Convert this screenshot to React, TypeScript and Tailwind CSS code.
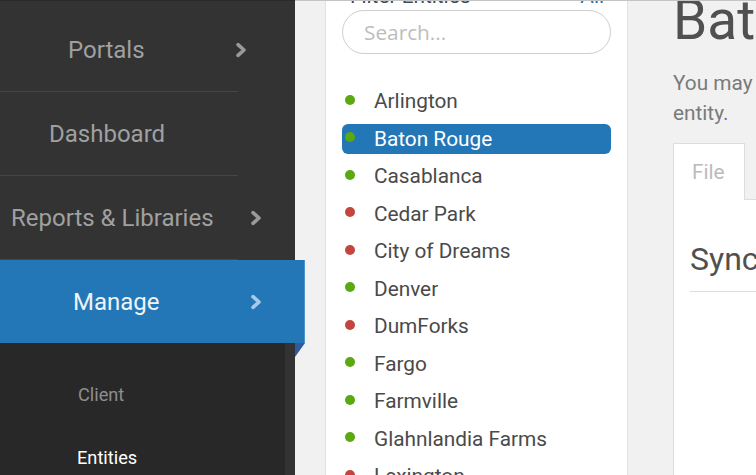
import React from "react";

const Chevron = ({ color }: { color: string }) => (
  <svg width="12" height="16" viewBox="0 0 12 16" fill="none">
    <path d="M3 2.6 L9 8 L3 13.4" stroke={color} strokeWidth="3.6" strokeLinecap="round" strokeLinejoin="round" />
  </svg>
);

const entities: { name: string; ok: boolean }[] = [
  { name: "Arlington", ok: true },
  { name: "Baton Rouge", ok: true },
  { name: "Casablanca", ok: true },
  { name: "Cedar Park", ok: false },
  { name: "City of Dreams", ok: false },
  { name: "Denver", ok: true },
  { name: "DumForks", ok: false },
  { name: "Fargo", ok: true },
  { name: "Farmville", ok: true },
  { name: "Glahnlandia Farms", ok: true },
  { name: "Lexington", ok: false },
];

export default function App() {
  return (
    <div className="flex h-[475px] w-[756px] overflow-hidden font-['Roboto','Liberation_Sans',sans-serif]">
      {/* Sidebar */}
      <div className="w-[295px] shrink-0 bg-[#333333] border-t border-[#2a2a2a] pt-[7px] flex flex-col">
        <div className="h-[83px] shrink-0 flex items-center">
          <span className="ml-[68px] text-[24px] leading-[28px] text-[#a0a0a0]">Portals</span>
          <span className="ml-auto mr-[48px] flex"><Chevron color="#9a9a9a" /></span>
        </div>
        <div className="w-[238px] h-px shrink-0 bg-[#464646]" />
        <div className="h-[83px] shrink-0 flex items-center">
          <span className="ml-[49px] text-[24px] leading-[28px] text-[#a0a0a0]">Dashboard</span>
        </div>
        <div className="w-[238px] h-px shrink-0 bg-[#464646]" />
        <div className="h-[83px] shrink-0 flex items-center">
          <span className="ml-[11px] text-[24px] leading-[28px] text-[#a0a0a0] whitespace-nowrap">Reports &amp; Libraries</span>
          <span className="ml-auto mr-[33px] flex"><Chevron color="#9a9a9a" /></span>
        </div>
        <div className="w-[238px] h-px shrink-0 bg-[#464646]" />
        <div className="relative z-10 h-[83px] w-[305px] shrink-0 flex items-center bg-[#2377b7] border-r border-[#4a93cf]">
          <span className="ml-[73px] text-[24px] leading-[28px] text-[#eef3f8]">Manage</span>
          <span className="ml-auto mr-[42px] flex"><Chevron color="#a9c9e8" /></span>
          <svg className="absolute left-[295px] top-full" width="10" height="14" viewBox="0 0 10 14">
            <polygon points="0,0 10,0 0,14" fill="#2c5c9d" />
          </svg>
        </div>
        <div className="w-[285px] flex-1 bg-[#282828] pt-[20px] flex flex-col">
          <div className="h-[63px] shrink-0 flex items-center">
            <span className="ml-[78px] text-[18.2px] leading-[22px] text-[#8e8e8e]">Client</span>
          </div>
          <div className="h-[63px] shrink-0 flex items-center">
            <span className="ml-[77px] text-[18.2px] leading-[22px] text-white">Entities</span>
          </div>
        </div>
      </div>

      {/* Right part */}
      <div className="flex-1 flex border-t border-[#c4c4c4]">
        <div className="w-[30px] shrink-0 bg-[#f1f1f1]" />
        {/* Entity list panel */}
        <div className="w-[303px] shrink-0 bg-white border-x border-[#e2e2e2] px-[16px] overflow-hidden flex flex-col">
          <div className="-mt-[17px] h-[24px] shrink-0 flex justify-between items-center text-[20.8px] leading-[24px]">
            <span className="ml-[8px] text-[#3b4b5e]">Filter Entities</span>
            <span className="mr-[7px] text-[#2a6fb0]">All</span>
          </div>
          <input
            placeholder="Search..."
            className="mt-[2px] h-[44px] w-full shrink-0 rounded-full border border-[#cfcfcf] pl-[21px] text-[20.8px] font-['Open_Sans',sans-serif] text-[#555] placeholder:text-[#bdbdbd] outline-none"
          />
          <div className="mt-[32px] flex flex-col gap-[7.5px]">
            {entities.map((e) => {
              const sel = e.name === "Baton Rouge";
              return (
                <div
                  key={e.name}
                  className={
                    "h-[30px] shrink-0 rounded-[6px] flex items-center pl-[3px] " +
                    (sel ? "bg-[#2377b7]" : "")
                  }
                >
                  <span
                    className={
                      "w-[10px] h-[10px] rounded-full mr-[19px] mb-[3px] shrink-0 " +
                      (e.ok ? "bg-[#5aa812]" : "bg-[#c44540]")
                    }
                  />
                  <span
                    className={
                      "text-[20.8px] leading-[24px] whitespace-nowrap " +
                      (sel ? "text-white" : "text-[#4a4a4a]")
                    }
                  >
                    {e.name}
                  </span>
                </div>
              );
            })}
          </div>
        </div>

        {/* Main area */}
        <div className="flex-1 bg-[#f1f1f1] pl-[45px] overflow-hidden flex flex-col">
          <h1 className="-mt-[9px] text-[55px] leading-[57px] text-[#505050] whitespace-nowrap">Baton Rouge</h1>
          <p className="mt-[19px] text-[20.8px] leading-[30px] text-[#7a7a7a] whitespace-nowrap">
            You may manage files and sync settings for this
            <br />
            entity.
          </p>
          <div className="mt-[15px] flex items-end">
            <div className="h-[57px] w-[72px] shrink-0 bg-white border border-b-0 border-[#dddddd] flex items-center pl-[18px] text-[20.8px] leading-[24px] text-[#bbbbbb]">
              File
            </div>
            <div className="flex-1 h-[57px] border-b border-[#dddddd]" />
          </div>
          <div className="flex-1 bg-white border-l border-[#dddddd] pl-[16px] pt-[39px]">
            <h2 className="text-[32px] leading-[40px] pb-[12px] border-b border-[#dddddd] text-[#505050] whitespace-nowrap">
              Synchronization
            </h2>
          </div>
        </div>
      </div>
    </div>
  );
}
